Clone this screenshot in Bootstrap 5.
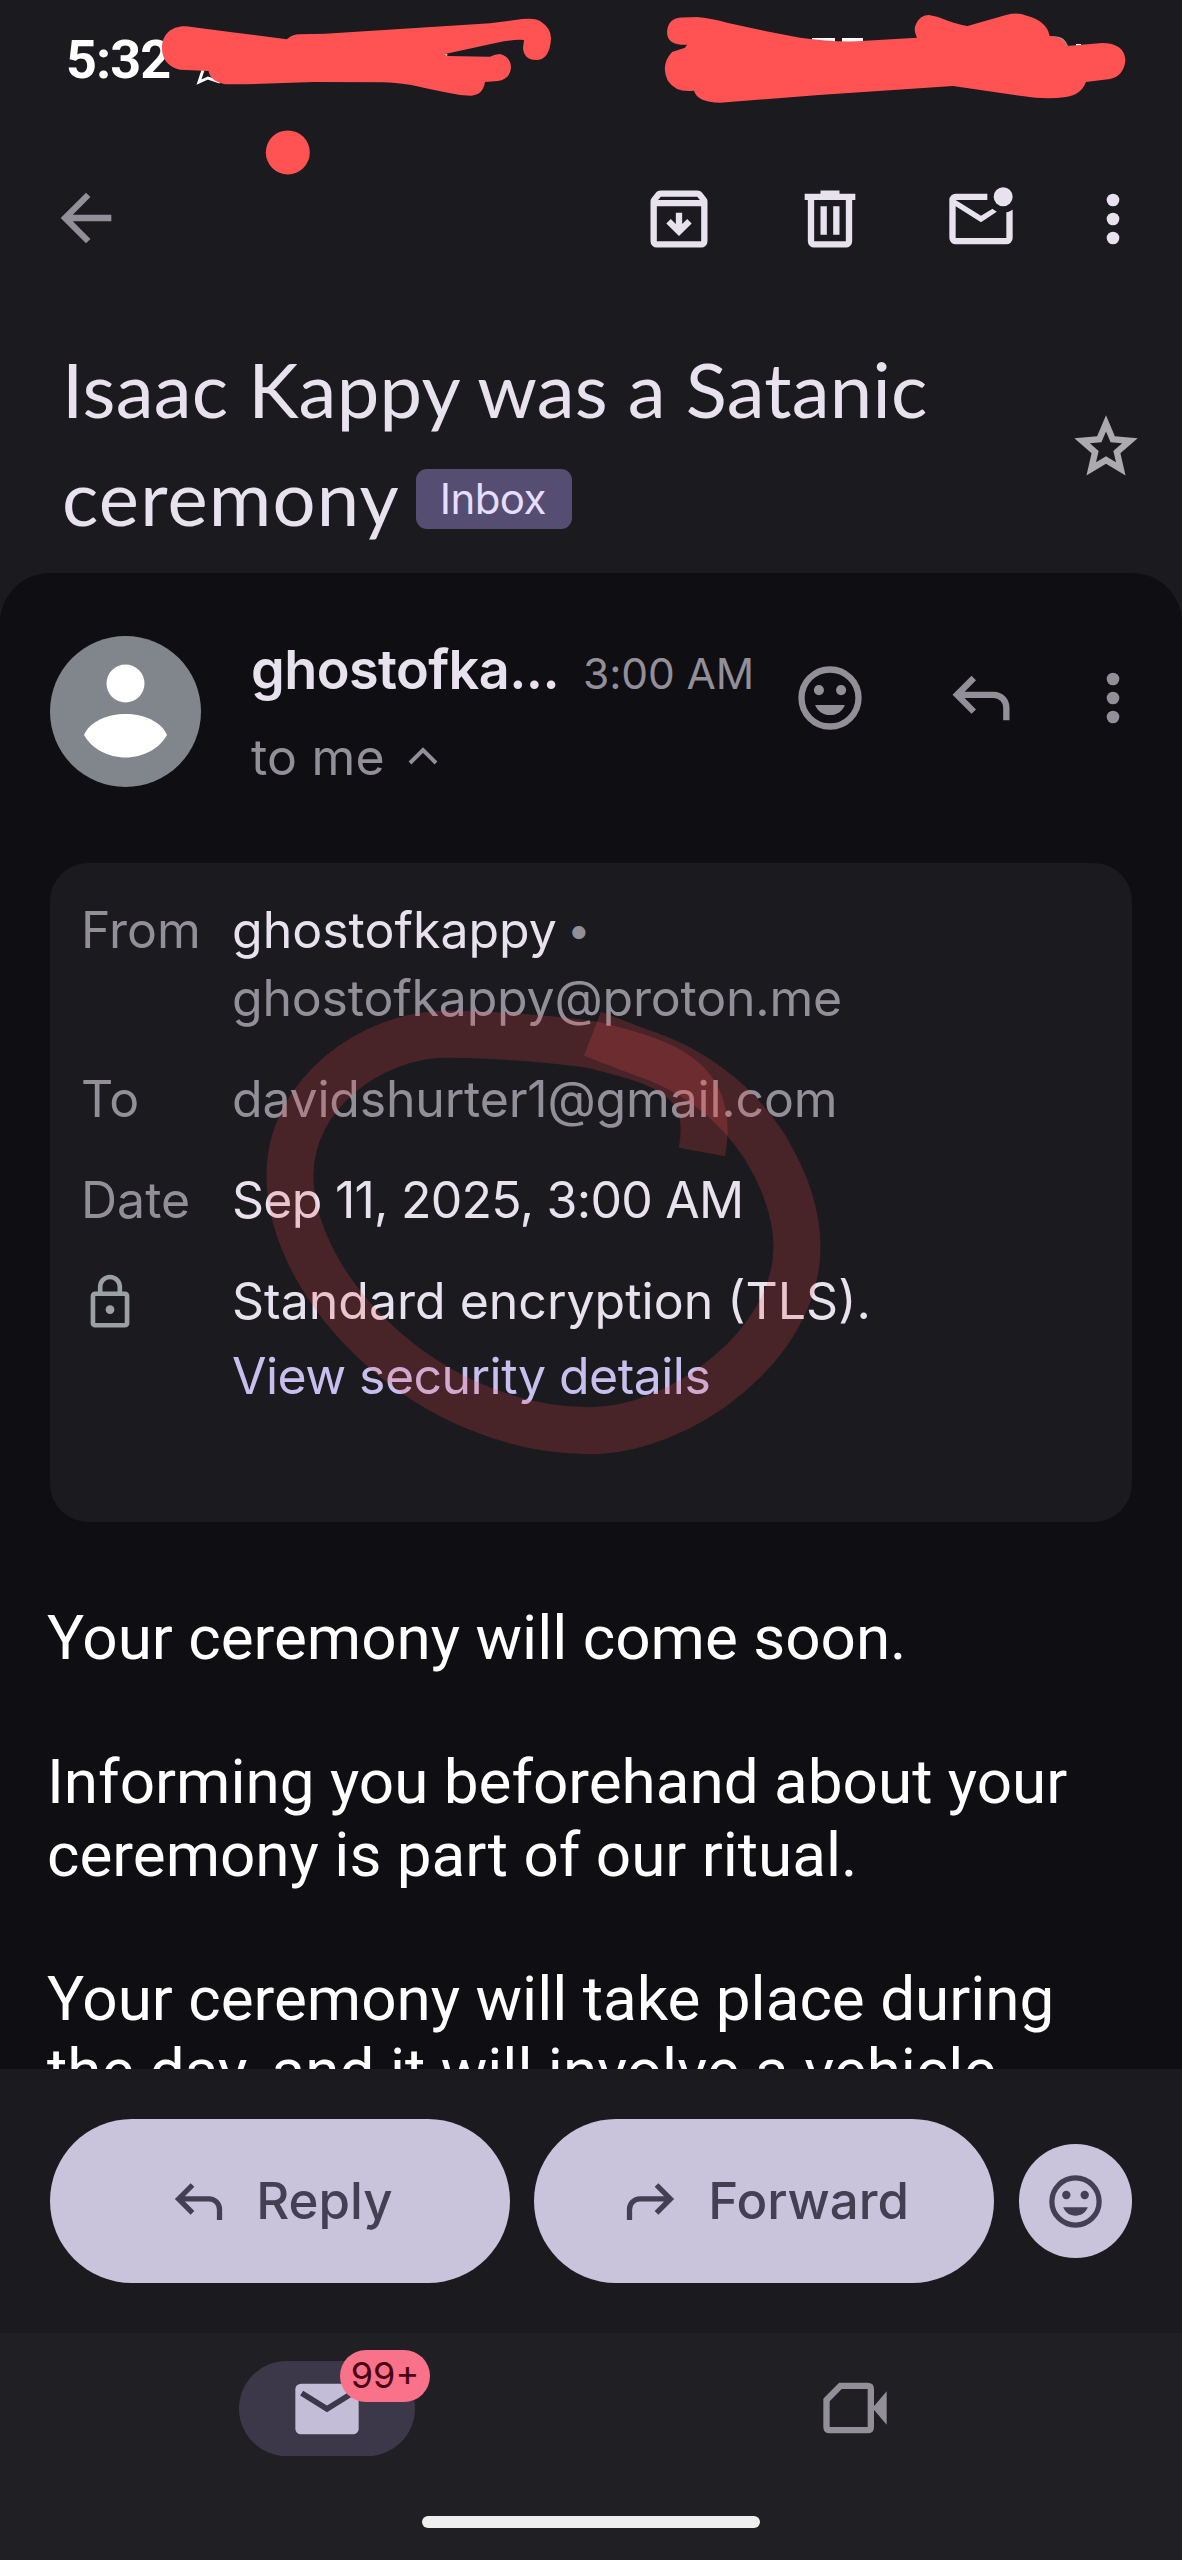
<!DOCTYPE html>
<html lang="en" data-bs-theme="dark">
<head>
<meta charset="utf-8">
<meta name="viewport" content="width=device-width, initial-scale=1">
<title>Mail</title>
<link rel="stylesheet" href="https://cdn.jsdelivr.net/npm/bootstrap@5.3.0/dist/css/bootstrap.min.css">
<style>
  body { background: #1b1a1f; color: #e8e1ee; font-family: Inter, "Open Sans", sans-serif; }
  .screen { width: 1182px; height: 2560px; }
  .ico { width: 76px; height: 76px; fill: currentColor; flex: none; display: block; }
  .ico-md { width: 63px; height: 63px; }
  .dim { color: #938f99; }
  .status { height: 120px; padding: 30px 0 0 66px; font: 700 54px/60px Roboto, sans-serif; letter-spacing: -1px; color: #fff; }
  .toolbar { height: 198px; padding: 0 31px 0 48px; }
  .back { margin-top: -2px; }
  .icons-row { gap: 75px; }
  .icons-row > :last-child { margin-left: -19px; }
  .subject-row { height: 255px; padding: 17px 38px 0 62px; }
  .subject { font: 400 76px/108px Lato, sans-serif; letter-spacing: .3px; color: #e8e1ee; width: 900px; }
  .subject-end { letter-spacing: 1.2px; }
  .inbox-tag { height: 60px; padding: 0 26px 0 24px; border-radius: 11px; background: #554e72; color: #e6deff; font: 400 42px/60px Inter, sans-serif; letter-spacing: -.6px; margin: 26px 0 0 16px; }
  .star { margin-top: 74px; color: #adaaaf; }
  .sheet { background: #0f0e12; border-radius: 50px 50px 0 0; height: 1496px; }
  .msg-head { padding: 63px 31px 0 50px; height: 290px; }
  .avatar { width: 151px; height: 151px; }
  .who { margin: -1px 0 0 50px; width: 520px; line-height: 70px; }
  .sender { font-size: 54px; font-weight: 600; letter-spacing: -.6px; width: 332px; }
  .when { font-size: 42.5px; letter-spacing: -.1px; }
  .tome { font-size: 50px; margin-top: 13px; letter-spacing: .2px; }
  .chev { margin-left: 22px; }
  .head-icons { margin: 24px 0 0 21px; }
  .details { margin: 0 50px; height: 659px; border-radius: 38px; background: #1b1a1f; padding: 33px 31px 0; font-size: 50px; line-height: 68px; gap: 33px; }
  .lbl { width: 151px; flex: none; }
  .addr { letter-spacing: -.2px; }
  .dot { font-size: 42px; line-height: 1; margin-left: -4px; vertical-align: 3px; }
  .when-sent { letter-spacing: -.75px; }
  .sec-link { color: #c8bfef; letter-spacing: -.55px; margin-top: 7px; }
  .lock { width: 62px; height: 62px; margin: -8px 0 0 -2px; color: #9aa0a3; }
  .mail-text { padding: 80px 48px 0 47px; font: 400 62px/72.2px Roboto, sans-serif; color: #fff; }
  .mail-text p { margin: 0 0 72.2px; }
  .action-bar { height: 264px; padding: 0 50px; gap: 24.5px; background: #1b1a1f; }
  .pill { height: 164.5px; gap: 26px; border: 0; background: #cac3dc; color: #444054; font-size: 51px; font-weight: 500; padding: 0; flex: 1 1 0; }
  .round-btn { width: 113.5px; height: 113.5px; border: 0; background: #cac3dc; color: #444054; flex: none; }
  .tabs-bar { height: 227px; background: #201f24; }
  .tabs { padding: 28px 63px 0; height: 183px; }
  .tab-pill { width: 176px; height: 95px; border-radius: 48px; background: #3c384a; color: #c4bdd7; }
  .video-tab { padding-top: 9px; }
  .count { left: 101px; top: -11px; width: 90px; height: 52px; border-radius: 26px; background: #fa7289; color: #4a0014; font-size: 36px; line-height: 51px; }
  .home-bar { width: 338px; height: 12px; border-radius: 6px; background: #efefef; }
  .ink { left: 0; top: 0; pointer-events: none; }
</style>
</head>
<body>
<div class="screen position-relative overflow-hidden d-flex flex-column">
  <div class="status">5:32</div>

  <nav class="toolbar d-flex align-items-center justify-content-between">
    <svg class="ico dim back" viewBox="0 0 24 24"><path d="M12 20 4 12l8-8 1.4 1.4L7.83 11H20v2H7.83l5.57 5.6z"/></svg>
    <div class="icons-row d-flex">
      <svg class="ico" viewBox="0 0 24 24"><path fill-rule="evenodd" d="M5 21q-.825 0-1.413-.588T3 19V6.525q0-.35.113-.675t.337-.6L4.7 3.725q.275-.35.687-.538T6.25 3h11.5q.45 0 .863.188t.687.537l1.25 1.525q.225.275.338.6t.112.675V19q0 .825-.588 1.413T19 21ZM5.4 6h13.2l-.85-1H6.25ZM5 8v11h14V8Zm7 9.4 4-4-1.4-1.4-1.6 1.6V10h-2v3.6L9.400 12 8 13.400Z"/></svg>
      <svg class="ico" viewBox="0 0 24 24"><path fill-rule="evenodd" d="M7 21q-.825 0-1.412-.587Q5 19.825 5 19V6H4V4h5V3h6v1h5v2h-1v13q0 .825-.587 1.413Q17.825 21 17 21ZM17 6H7v13h10ZM9 17h2V8H9Zm4 0h2V8h-2Z"/></svg>
      <svg class="ico" viewBox="0 0 24 24"><path d="M4 20q-.825 0-1.413-.588T2 18V6q0-.825.588-1.413T4 4h10v2H4l8 5 3.650-2.275q.35.325.763.563t.562.412L12 13 4 8v10h16V9.900q.575-.125 1.075-.35T22 9v9q0 .825-.588 1.413T20 20Z"/><circle cx="19" cy="5" r="3"/></svg>
      <svg class="ico" viewBox="0 0 24 24"><circle cx="12" cy="6" r="2"/><circle cx="12" cy="12" r="2"/><circle cx="12" cy="18" r="2"/></svg>
    </div>
  </nav>

  <header class="subject-row d-flex justify-content-between align-items-start">
    <h1 class="subject m-0"><div>Isaac Kappy was a Satanic</div><div class="d-flex align-items-start"><span class="subject-end">ceremony</span><span class="inbox-tag">Inbox</span></div></h1>
    <svg class="ico star" viewBox="0 0 24 24"><path fill-rule="evenodd" d="m8.850 16.825 3.150-1.900 3.150 1.925-.825-3.600 2.775-2.400-3.650-.325-1.450-3.400-1.450 3.375-3.650.325 2.775 2.425ZM5.825 21l1.625-7.025L2 9.250l7.200-.625L12 2l2.800 6.625 7.200.625-5.450 4.725L18.175 21 12 17.275Z"/></svg>
  </header>

  <main class="sheet overflow-hidden flex-shrink-0">
    <div class="msg-head d-flex align-items-start">
      <svg class="avatar flex-shrink-0" viewBox="0 0 151 151"><circle cx="75.500" cy="75.500" r="75.500" fill="#80868b"/><circle cx="75.500" cy="47.500" r="19" fill="#fff"/><path d="M34 99C40 85 58 78 75.500 78S111 85 117 99C109 113 93 121.500 75.500 121.500S42 113 34 99Z" fill="#fff"/></svg>
      <div class="who">
        <div class="d-flex align-items-baseline"><span class="sender">ghostofka...</span><span class="when dim">3:00 AM</span></div>
        <div class="tome dim d-flex align-items-center">to me
          <svg class="chev" width="32" height="22" viewBox="0 0 32 22" fill="none" stroke="currentColor" stroke-width="4"><path d="M3 17 16 4l13 13"/></svg>
        </div>
      </div>
      <div class="icons-row head-icons d-flex ms-auto dim">
        <svg class="ico" viewBox="0 0 24 24"><circle cx="12" cy="12" r="9" fill="none" stroke="currentColor" stroke-width="2"/><circle cx="8.500" cy="9.500" r="1.600"/><circle cx="15.500" cy="9.500" r="1.600"/><path d="M7.300 14.200h9.400C15.900 16.200 14.200 17.400 12 17.400S8.100 16.200 7.300 14.200Z"/></svg>
        <svg class="ico" viewBox="0 0 24 24"><path d="M19 19v-4q0-1.250-.875-2.125T16 12H6.825l3.600 3.600L9 17l-6-6 6-6 1.425 1.400-3.600 3.600H16q2.075 0 3.538 1.463T21 15v4Z"/></svg>
        <svg class="ico" viewBox="0 0 24 24"><circle cx="12" cy="6" r="2"/><circle cx="12" cy="12" r="2"/><circle cx="12" cy="18" r="2"/></svg>
      </div>
    </div>

    <section class="details d-flex flex-column">
      <div class="d-flex"><div class="lbl dim">From</div><div><div>ghostofkappy <span class="dim dot">•</span></div><div class="dim addr">ghostofkappy@proton.me</div></div></div>
      <div class="d-flex"><div class="lbl dim">To</div><div class="dim addr">davidshurter1@gmail.com</div></div>
      <div class="d-flex"><div class="lbl dim">Date</div><div class="when-sent">Sep 11, 2025, 3:00 AM</div></div>
      <div class="d-flex">
        <div class="lbl"><svg class="lock" viewBox="0 0 24 24" fill="none" stroke="currentColor" stroke-width="1.800"><rect x="5.400" y="9.200" width="13.200" height="12.200" rx=".8"/><path d="M8.200 9V6.500a3.800 3.800 0 0 1 7.600 0V9"/><circle cx="12" cy="15.300" r="1.700" fill="currentColor" stroke="none"/></svg></div>
        <div><div>Standard encryption (TLS).</div><div class="sec-link">View security details</div></div>
      </div>
    </section>

    <article class="mail-text">
      <p>Your ceremony will come soon.</p>
      <p>Informing you beforehand about your ceremony is part of our ritual.</p>
      <p>Your ceremony will take place during<br>the day, and it will involve a vehicle.</p>
    </article>
  </main>

  <div class="action-bar d-flex align-items-center flex-shrink-0">
    <button class="pill rounded-pill d-flex align-items-center justify-content-center"><svg class="ico ico-md" viewBox="0 0 24 24"><path d="M19 19v-4q0-1.250-.875-2.125T16 12H6.825l3.600 3.600L9 17l-6-6 6-6 1.425 1.400-3.600 3.600H16q2.075 0 3.538 1.463T21 15v4Z"/></svg>Reply</button>
    <button class="pill rounded-pill d-flex align-items-center justify-content-center"><svg class="ico ico-md" viewBox="0 0 24 24"><path d="M5 19v-4q0-1.250.875-2.125T8 12h9.175l-3.600 3.600L15 17l6-6-6-6-1.425 1.400 3.600 3.600H8q-2.075 0-3.538 1.463T3 15v4Z"/></svg>Forward</button>
    <button class="round-btn rounded-circle d-flex align-items-center justify-content-center p-0"><svg class="ico ico-md" viewBox="0 0 24 24"><circle cx="12" cy="12" r="9" fill="none" stroke="currentColor" stroke-width="2"/><circle cx="8.500" cy="9.500" r="1.600"/><circle cx="15.500" cy="9.500" r="1.600"/><path d="M7.300 14.200h9.400C15.900 16.200 14.200 17.400 12 17.400S8.100 16.200 7.300 14.200Z"/></svg></button>
  </div>

  <footer class="tabs-bar flex-shrink-0">
    <div class="tabs d-flex">
      <div class="w-50 d-flex justify-content-center">
        <div class="tab-pill position-relative d-flex align-items-center justify-content-center">
          <svg class="ico" viewBox="0 0 24 24"><rect x="2" y="4" width="20" height="16" rx="1.800"/><path d="m4 7 8 5 8-5" fill="none" stroke="#3c384a" stroke-width="1.800"/></svg>
          <span class="count position-absolute text-center">99+</span>
        </div>
      </div>
      <div class="w-50 d-flex justify-content-center dim video-tab">
        <svg class="ico" viewBox="0 0 24 24"><path d="M3 9.500 7.400 5H16q1 0 1 1v12q0 1-1 1H4q-1 0-1-1Z" fill="none" stroke="currentColor" stroke-width="2"/><path d="m17.500 12 4.500-5.300v10.600Z"/></svg>
      </div>
    </div>
    <div class="home-bar mx-auto"></div>
  </footer>

  <!-- Pen and highlighter marks laid over the screen -->
  <svg class="ink position-absolute" width="1182" height="2560" viewBox="0 0 1182 2560">
    <g fill="none" stroke="#fff" stroke-width="3"><path d="M203 70l-4 12 9-4 12 4"/><path d="M436 56q6-2 11 0"/></g>
    <path d="M812 38h23v5h-23zM842 38h21v5h-21zM1076 44h5v4h-5z" fill="#fff"/>
    <path d="M1050 38Q1064 36 1067 48" fill="none" stroke="#999" stroke-width="3"/>
    <g fill="#ff5252">
      <path d="M162 48C162 34 172 25 188 26.500L230 32 287 39.300Q292 34.300 300 34.300L325 33.700 490 23.300 515 20Q533 17 540 21 551 28 551 38 550 60 536 60 524 60 523 48L524 40Q515 39 498 42.500L445 54 447 56 490 56.700Q495 54 500 54 511 57 511 68 510 79 498 81L485 82Q483 95 471 95.700L460 95C430 90 410 82.500 383 82.200L314 82 245 84.300 225 84.300Q210 81 208.600 71L180 69.700C168 67 162 59 162 48Z"/>
      <path d="M667 31.700Q668 18 682 17.500L697 17Q710 18 727 22.700L765 31 800 37.700Q830 42 857 41.300L917 37.700Q913 30 916 24 920 15 929 15L938 17Q958 25 967.500 26L1006 15Q1018 12 1026 15.500 1047 21 1049.700 36 1063 36 1067 46L1102 43Q1124 43 1125.400 60 1124 76 1110 79L1086 82Q1081 95 1066 97 1046 100 1022 96L953 86 819 95 720 102.700Q697 102 694 90.700 676 93 668 81 660 65 672 52L685 47.700 687 44.700C676 45 667 43 667 31.700Z"/>
      <circle cx="287.800" cy="152.400" r="22"/>
    </g>
    <g fill="none" stroke="#ff5252" stroke-opacity=".2" stroke-width="47">
      <path d="M592.500 1033.700 640 1052C690 1068 735 1100 764.700 1146.700 785 1180 797 1215 797 1247 797 1345 680 1430.700 590 1430.700"/>
      <path d="M590 1430.700C430 1430.700 290 1290 290 1175 290 1095 370 1034 449 1034Q533 1036 594 1045C660 1062 716 1075 702 1152"/>
    </g>
  </svg>
</div>
<script src="https://cdn.jsdelivr.net/npm/bootstrap@5.3.0/dist/js/bootstrap.bundle.min.js"></script>
</body>
</html>
